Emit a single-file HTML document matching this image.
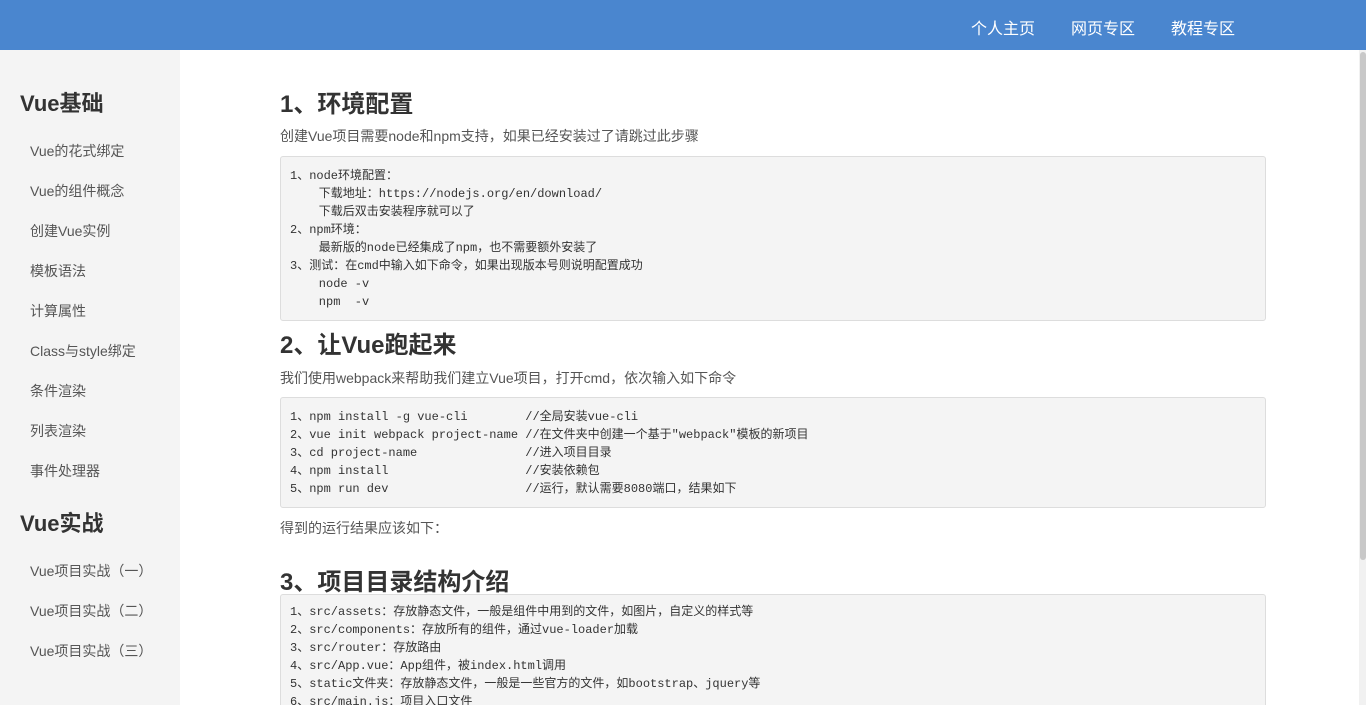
<!DOCTYPE html>
<html><head><meta charset="utf-8"><style>
*{margin:0;padding:0;box-sizing:border-box}
html,body{width:1366px;height:705px;overflow:hidden}
body{background:#fff;font-family:"Liberation Sans","Noto Sans CJK SC",sans-serif;color:#333;position:relative}
.hd{position:absolute;left:0;top:0;width:1366px;height:50px;background:#4a86cf}
.hd a{position:absolute;top:15px;color:#fff;font-size:16px;text-decoration:none}
.sb{position:absolute;left:0;top:50px;width:180px;height:655px;background:#f4f4f4}
.sb h2{position:absolute;left:20px;font-size:22px;font-weight:bold;color:#333}
.sb a{position:absolute;left:30px;font-size:14px;color:#555;text-decoration:none}
h1{position:absolute;left:280px;font-size:24px;font-weight:bold;color:#333;line-height:30px}
p{position:absolute;left:280px;font-size:14px;color:#555}
pre{position:absolute;z-index:2;left:280px;width:986px;background:#f4f4f4;border:1px solid #ddd;border-radius:3px;padding:10px 9px;font-family:"Liberation Mono","Noto Sans CJK SC",monospace;font-size:12px;line-height:18px;color:#333;overflow:hidden}
.scroll{position:absolute;left:1359px;top:50px;width:7px;height:655px;background:#f1f1f1}
.thumb{position:absolute;left:1360px;top:52px;width:6px;height:508px;background:#c8c8c8;border-radius:3px}
</style></head><body>
<div class="hd"><a style="left:971px">个人主页</a><a style="left:1071px">网页专区</a><a style="left:1171px">教程专区</a></div>
<div class="sb">
<h2 style="top:36px">Vue基础</h2>
<a style="top:91px">Vue的花式绑定</a>
<a style="top:131px">Vue的组件概念</a>
<a style="top:171px">创建Vue实例</a>
<a style="top:211px">模板语法</a>
<a style="top:251px">计算属性</a>
<a style="top:291px">Class与style绑定</a>
<a style="top:331px">条件渲染</a>
<a style="top:371px">列表渲染</a>
<a style="top:411px">事件处理器</a>
<h2 style="top:456px">Vue实战</h2>
<a style="top:511px">Vue项目实战（一）</a>
<a style="top:551px">Vue项目实战（二）</a>
<a style="top:591px">Vue项目实战（三）</a>
</div>
<h1 style="top:90px">1、环境配置</h1>
<p style="top:126px">创建Vue项目需要node和npm支持，如果已经安装过了请跳过此步骤</p>
<pre style="top:156px;height:165px">1、node环境配置：
    下载地址：https://nodejs.org/en/download/
    下载后双击安装程序就可以了
2、npm环境：
    最新版的node已经集成了npm，也不需要额外安装了
3、测试：在cmd中输入如下命令，如果出现版本号则说明配置成功
    node -v
    npm  -v</pre>
<h1 style="top:331px">2、让Vue跑起来</h1>
<p style="top:368px">我们使用webpack来帮助我们建立Vue项目，打开cmd，依次输入如下命令</p>
<pre style="top:397px;height:111px">1、npm install -g vue-cli        //全局安装vue-cli
2、vue init webpack project-name //在文件夹中创建一个基于"webpack"模板的新项目
3、cd project-name               //进入项目目录
4、npm install                   //安装依赖包
5、npm run dev                   //运行，默认需要8080端口，结果如下</pre>
<p style="top:518px">得到的运行结果应该如下：</p>
<h1 style="top:568px">3、项目目录结构介绍</h1>
<pre style="top:594px;height:130px;padding-top:8px">1、src/assets：存放静态文件，一般是组件中用到的文件，如图片，自定义的样式等
2、src/components：存放所有的组件，通过vue-loader加载
3、src/router：存放路由
4、src/App.vue：App组件，被index.html调用
5、static文件夹：存放静态文件，一般是一些官方的文件，如bootstrap、jquery等
6、src/main.js：项目入口文件</pre>
<div class="scroll"></div><div class="thumb"></div>
</body></html>
